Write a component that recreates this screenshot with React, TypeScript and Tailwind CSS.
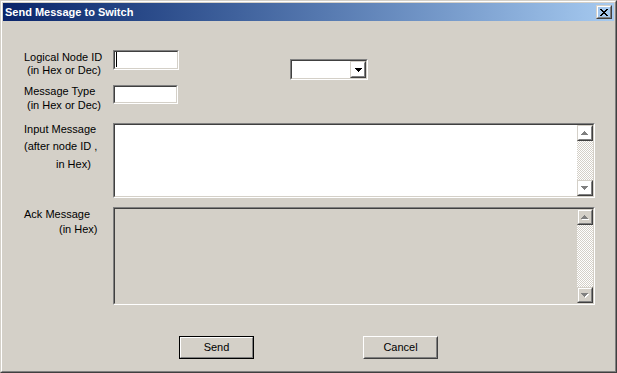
import React from "react";

type P = { className?: string; inner?: string; children?: React.ReactNode };

const Sunken = ({ className = "", inner = "", children }: P) => (
  <div
    className={`border border-t-[#808080] border-l-[#808080] border-r-white border-b-white ${className}`}
  >
    <div
      className={`w-full h-full border border-t-[#404040] border-l-[#404040] border-r-[#d4d0c8] border-b-[#d4d0c8] ${inner}`}
    >
      {children}
    </div>
  </div>
);

const Raised = ({ className = "", children }: P) => (
  <div
    className={`border border-t-[#d4d0c8] border-l-[#d4d0c8] border-r-[#404040] border-b-[#404040] ${className}`}
  >
    <div className="w-full h-full border border-t-white border-l-white border-r-[#808080] border-b-[#808080] flex items-center justify-center">
      {children}
    </div>
  </div>
);

const Tri = ({ down, color, dx = 0, dy = 0 }: { down?: boolean; color: string; dx?: number; dy?: number }) => {
  const rows = [
    [3, 1],
    [2, 3],
    [1, 5],
    [0, 7],
  ];
  return (
    <>
      {rows.map(([x, w], i) => (
        <rect key={i} x={x + dx} y={(down ? 3 - i : i) + dy} width={w} height={1} fill={color} />
      ))}
    </>
  );
};

const DisabledArrow = ({ down }: { down?: boolean }) => (
  <svg width="8" height="5" viewBox="0 0 8 5" shapeRendering="crispEdges">
    <Tri down={down} color="#ffffff" dx={1} dy={1} />
    <Tri down={down} color="#808080" />
  </svg>
);

const BlackDown = () => (
  <svg width="7" height="4" viewBox="0 0 7 4" shapeRendering="crispEdges">
    <Tri down color="#000000" />
  </svg>
);

const CloseX = () => {
  const r = [0, 1, 2, 3, 4, 5, 6];
  return (
    <svg width="8" height="7" viewBox="0 0 8 7" shapeRendering="crispEdges">
      {r.map((i) => (
        <React.Fragment key={i}>
          <rect x={i} y={i} width={2} height={1} fill="#000" />
          <rect x={6 - i} y={i} width={2} height={1} fill="#000" />
        </React.Fragment>
      ))}
    </svg>
  );
};

const ScrollBar = () => (
  <div className="w-4 h-full flex flex-col shrink-0">
    <Raised className="w-4 h-4 shrink-0">
      <DisabledArrow />
    </Raised>
    <div className="flex-1 bg-[repeating-conic-gradient(#ffffff_0%_25%,#d4d0c8_0%_50%)] bg-[length:2px_2px]" />
    <Raised className="w-4 h-4 shrink-0">
      <DisabledArrow down />
    </Raised>
  </div>
);

export default function App() {
  return (
    <div className="w-[617px] h-[373px] bg-[#d4d0c8] border border-t-[#d4d0c8] border-l-[#d4d0c8] border-r-[#404040] border-b-[#404040] text-[11px] leading-[13px] text-black [font-family:'Liberation_Sans',Arial,sans-serif]">
      <div className="h-full border border-t-white border-l-white border-r-[#808080] border-b-[#808080] p-px flex flex-col">
        {/* Title bar */}
        <div className="h-[18px] shrink-0 flex items-center justify-between bg-linear-to-r from-[#0a246a] to-[#a6caf0] pl-[2px] pr-[2px]">
          <span className="text-white font-bold text-[11px] leading-[18px]">Send Message to Switch</span>
          <Raised className="w-4 h-[14px]">
            <CloseX />
          </Raised>
        </div>

        {/* Body */}
        <div className="flex-1 flex flex-col pt-[29px] pl-[21px]">
          {/* Row 1 */}
          <div className="flex h-[35px] shrink-0">
            <div className="w-[89px] pt-px">
              <div className="h-[13px]">Logical Node ID</div>
              <div className="h-[13px] ml-[3px]">(in Hex or Dec)</div>
            </div>
            <Sunken className="w-[66px] h-[20px] bg-white" inner="bg-white">
              <div className="ml-px w-px h-[15px] bg-black" />
            </Sunken>
            <Sunken className="ml-[111px] mt-[9px] w-[78px] h-[21px]" inner="bg-white flex justify-end">
              <Raised className="w-4 h-full">
                <BlackDown />
              </Raised>
            </Sunken>
          </div>

          {/* Row 2 */}
          <div className="flex h-[38px] shrink-0">
            <div className="w-[89px]">
              <div className="h-[14px]">Message Type</div>
              <div className="h-[13px] ml-[3px]">(in Hex or Dec)</div>
            </div>
            <Sunken className="w-[65px] h-[19px]" inner="bg-white" />
          </div>

          {/* Row 3 */}
          <div className="flex h-[84px] shrink-0">
            <div className="w-[89px]">
              <div className="h-[17px]">Input Message</div>
              <div className="h-[18px]">(after node ID ,</div>
              <div className="h-[13px] ml-[32px]">in Hex)</div>
            </div>
            <Sunken className="w-[482px] h-[75px]" inner="bg-white flex">
              <div className="flex-1" />
              <ScrollBar />
            </Sunken>
          </div>

          {/* Row 4 */}
          <div className="flex h-[129px] shrink-0">
            <div className="w-[89px] pt-px">
              <div className="h-[15px]">Ack Message</div>
              <div className="h-[13px] ml-[35px]">(in Hex)</div>
            </div>
            <Sunken className="w-[482px] h-[98px]" inner="bg-[#d4d0c8] flex">
              <div className="flex-1" />
              <ScrollBar />
            </Sunken>
          </div>

          {/* Buttons */}
          <div className="flex h-[23px] shrink-0">
            <div className="ml-[155px] w-[75px] h-[23px] border border-black">
              <div className="h-full border border-t-white border-l-white border-r-[#808080] border-b-[#808080] flex items-center justify-center">
                Send
              </div>
            </div>
            <div className="ml-[109px] w-[75px] h-[23px] border border-t-white border-l-white border-r-[#404040] border-b-[#404040]">
              <div className="h-full border border-t-[#d4d0c8] border-l-[#d4d0c8] border-r-[#808080] border-b-[#808080] flex items-center justify-center">
                Cancel
              </div>
            </div>
          </div>
        </div>
      </div>
    </div>
  );
}
